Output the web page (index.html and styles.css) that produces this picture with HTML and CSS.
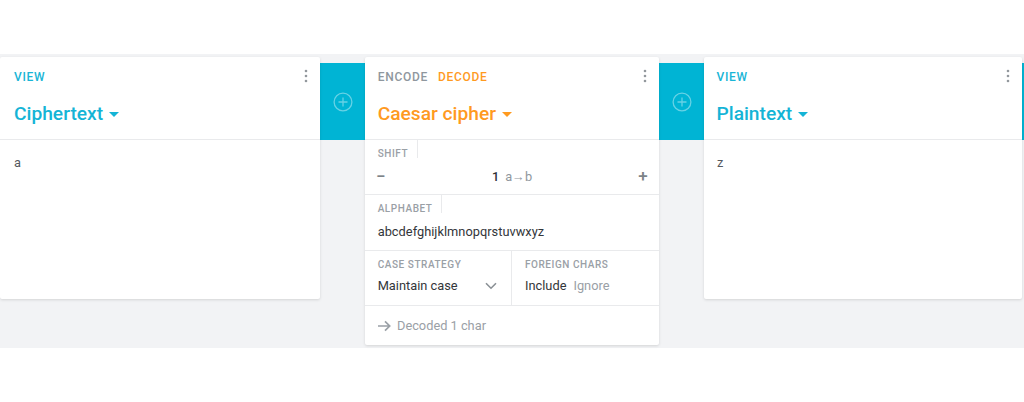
FILE: index.html
```html
<!DOCTYPE html>
<html lang="en">
<head>
<meta charset="utf-8">
<title>Caesar cipher</title>
<link rel="stylesheet" href="styles.css">
</head>
<body>
<main class="stage">
  <section class="card card-side card-first">
    <header class="card-head">
      <div class="card-top">
        <div class="tabs"><span class="tab tab-view">VIEW</span></div>
        <svg class="more" width="4" height="14" viewBox="0 0 4 14"><circle cx="2" cy="2" r="1.3"/><circle cx="2" cy="7" r="1.3"/><circle cx="2" cy="12" r="1.3"/></svg>
      </div>
      <h2 class="title title-view">Ciphertext<span class="caret"></span></h2>
    </header>
    <div class="content">a</div>
  </section>
  <div class="gutter">
    <svg width="20" height="20" viewBox="0 0 20 20" class="add"><circle cx="10" cy="10" r="8.9"/><path d="M10 5.5v9M5.5 10h9"/></svg>
  </div>
  <section class="card card-main">
    <header class="card-head">
      <div class="card-top">
        <div class="tabs"><span class="tab">ENCODE</span><span class="tab tab-active">DECODE</span></div>
        <svg class="more" width="4" height="14" viewBox="0 0 4 14"><circle cx="2" cy="2" r="1.3"/><circle cx="2" cy="7" r="1.3"/><circle cx="2" cy="12" r="1.3"/></svg>
      </div>
      <h2 class="title title-op">Caesar cipher<span class="caret"></span></h2>
    </header>
    <div class="field field-shift">
      <span class="label label-tick">SHIFT</span>
      <div class="stepper">
        <span class="step">−</span>
        <span class="value"><b>1</b><span class="hint">a→b</span></span>
        <span class="step">+</span>
      </div>
    </div>
    <div class="field field-alpha">
      <span class="label label-tick">ALPHABET</span>
      <div class="alpha">abcdefghijklmnopqrstuvwxyz</div>
    </div>
    <div class="split">
      <div class="field-half half-left">
        <span class="label">CASE STRATEGY</span>
        <div class="select">Maintain case
          <svg width="12" height="8" viewBox="0 0 12 8" class="chev"><path d="M1 1.2l5 5 5-5"/></svg>
        </div>
      </div>
      <div class="field-half half-right">
        <span class="label">FOREIGN CHARS</span>
        <div class="choices"><span class="on">Include</span><span class="off">Ignore</span></div>
      </div>
    </div>
    <footer class="status">
      <svg width="13" height="12" viewBox="0 0 13 12" class="arrow"><path d="M0 6h11.5M7 1.3L11.7 6 7 10.7"/></svg>
      Decoded 1 char
    </footer>
  </section>
  <div class="gutter">
    <svg width="20" height="20" viewBox="0 0 20 20" class="add"><circle cx="10" cy="10" r="8.9"/><path d="M10 5.5v9M5.5 10h9"/></svg>
  </div>
  <section class="card card-side card-last">
    <header class="card-head">
      <div class="card-top">
        <div class="tabs"><span class="tab tab-view">VIEW</span></div>
        <svg class="more" width="4" height="14" viewBox="0 0 4 14"><circle cx="2" cy="2" r="1.3"/><circle cx="2" cy="7" r="1.3"/><circle cx="2" cy="12" r="1.3"/></svg>
      </div>
      <h2 class="title title-view">Plaintext<span class="caret"></span></h2>
    </header>
    <div class="content">z</div>
  </section>
  <div class="edge"></div>
</main>
</body>
</html>
```
FILE: styles.css
```css
* { box-sizing: border-box; }
html, body { margin: 0; background: #fff; }
body { padding-top: 54px; height: 402px; overflow: hidden; font-family: Roboto, "Liberation Sans", sans-serif; }
.stage { display: flex; align-items: flex-start; height: 294px; padding-top: 3px; background: #f2f3f5; }
.card { background: #fff; border-radius: 2px; box-shadow: 0 1px 3px rgba(0,0,0,.13); position: relative; z-index: 1; }
.card-side { height: 242px; }
.card-first { width: 320px; }
.card-last { width: 318px; }
.card-main { width: 294px; height: 288px; }
.gutter { flex: none; width: 45px; height: 77px; margin-top: 6px; background: #00b4d4; display: flex; align-items: center; justify-content: center; }
.edge { flex: none; width: 2px; height: 77px; margin-top: 6px; background: #00b4d4; }
.add { fill: none; stroke: rgba(255,255,255,.4); stroke-width: 1.3; }
.card-head { height: 83px; padding: 12px 12.5px 0 14px; border-bottom: 1px solid #e9eaec; }
.card-main .card-head { padding-left: 12.7px; }
.card-last .card-head { padding-left: 12.5px; padding-right: 12px; }
.card-top { display: flex; justify-content: space-between; align-items: center; height: 14px; }
.more { fill: #93989d; flex: none; }
.tabs { display: flex; gap: 10px; padding-top: 1px; }
.tab { font-size: 12px; font-weight: 500; letter-spacing: .7px; line-height: 14px; color: #8f979e; }
.tab-view { color: #19b5d6; }
.tab-active { color: #ff9a1f; }
.title { margin: 18px 0 0; font-size: 19.2px; font-weight: 500; line-height: 26px; display: flex; align-items: center; }
.title-view { color: #14b4d6; }
.title-op { color: #ff9a1f; }
.caret { width: 0; height: 0; margin-left: 6px; margin-top: 1px; border-left: 5px solid transparent; border-right: 5px solid transparent; border-top: 5px solid currentColor; }
.content { padding: 16px 14px; font-size: 12.8px; line-height: 14px; color: #55595e; }
.card-last .content { padding-left: 13px; }
.label { display: block; font-size: 10px; font-weight: 500; letter-spacing: .55px; line-height: 12px; color: #9aa0a6; }
.label-tick { display: inline-block; height: 18px; padding: 8px 9px 0 12.7px; border-right: 1px solid #e9eaec; vertical-align: top; }
.field { border-bottom: 1px solid #e9eaec; }
.field-shift { height: 55px; }
.field-alpha { height: 56px; }
.stepper { display: flex; justify-content: space-between; align-items: center; height: 20px; margin-top: 7px; padding: 0 11px 0 11px; font-size: 12.8px; }
.step { font-size: 17px; font-weight: 500; line-height: 20px; color: #7d8388; width: 10px; text-align: center; }
.value { display: flex; gap: 6px; color: #2f3236; }
.value b { font-weight: 500; }
.hint { color: #8f979e; }
.alpha { padding: 9px 12.7px 0; font-size: 12.8px; line-height: 18px; color: #33363a; letter-spacing: .02px; }
.split { display: flex; height: 55px; border-bottom: 1px solid #e9eaec; }
.field-half { padding-top: 8px; }
.half-left { width: 147px; padding-left: 12.7px; padding-right: 14px; border-right: 1px solid #e9eaec; }
.half-right { padding-left: 13px; flex: 1; }
.select { display: flex; justify-content: space-between; align-items: center; margin-top: 6px; font-size: 12.8px; line-height: 18px; color: #33363a; }
.chev { fill: none; stroke: #8a9095; stroke-width: 1.6; }
.choices { display: flex; gap: 7px; margin-top: 6px; font-size: 12.8px; line-height: 18px; }
.on { color: #33363a; }
.off { color: #9aa0a6; }
.status { display: flex; align-items: center; gap: 6.3px; padding: 11px 12.7px 0; font-size: 12.8px; line-height: 18px; color: #9aa0a6; }
.arrow { fill: none; stroke: #9aa0a6; stroke-width: 1.7; flex: none; }
```
